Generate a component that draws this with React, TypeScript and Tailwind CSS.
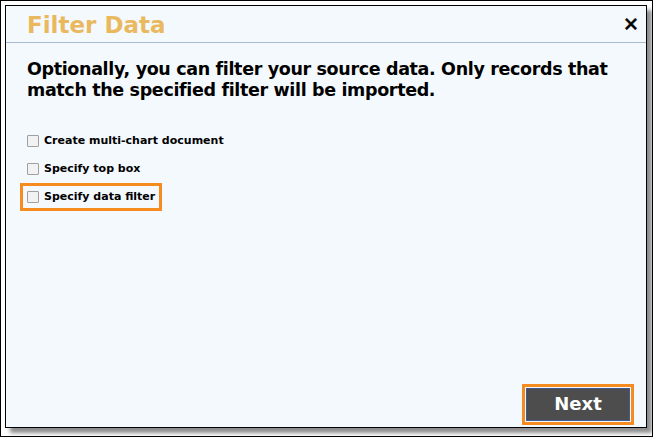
import React from "react";

const font = { fontFamily: '"DejaVu Sans", Verdana, sans-serif' };

function Check({ label }: { label: string }) {
  return (
    <div className="flex items-center gap-[5px]">
      <span className="w-[12px] h-[12px] border border-[#a0a0a0] bg-[#f2f2f2] rounded-[1px] shrink-0" />
      <span className="text-[11px] font-bold text-black leading-[14px]">{label}</span>
    </div>
  );
}

export default function App() {
  return (
    <div className="w-[653px] h-[437px] bg-white border border-black p-[4px] overflow-hidden" style={font}>
      <div className="w-[642px] h-[423px] border border-black bg-[#f4f9fd] shadow-[5px_5px_4px_rgba(0,0,0,0.45)] flex flex-col">
        <div className="h-[37px] border-b border-[#a9b9cf] flex items-center justify-between pl-[21px] pr-[7px]">
          <span className="text-[23px] font-bold text-[#eab95f] leading-none pt-[3px]">Filter Data</span>
          <span className="text-[19px] font-black text-black leading-none" style={{ WebkitTextStroke: "0.6px black" }}>✕</span>
        </div>
        <div className="flex-1 flex flex-col pl-[21px] pr-[14px] pt-[16px]">
          <p className="text-[17.5px] font-bold text-black leading-[21px] tracking-[-0.35px]">
            Optionally, you can filter your source data. Only records that match the specified filter will be imported.
          </p>
          <div className="mt-[33px] flex flex-col gap-[14px]">
            <Check label="Create multi-chart document" />
            <Check label="Specify top box" />
            <div className="self-start -ml-[7px] -mt-[7px] border-[3px] border-[#f68b1f] px-[4px] py-[4px]">
              <Check label="Specify data filter" />
            </div>
          </div>
          <div className="mt-auto self-end mb-[2px] -mr-[2px] border-[3px] border-[#f68b1f] p-[1px]">
            <div className="w-[104px] h-[33px] bg-[#4d4d4d] border border-[#3a5a9a] flex items-center justify-center pb-[3px] text-white text-[18px] font-bold">
              Next
            </div>
          </div>
        </div>
      </div>
    </div>
  );
}
